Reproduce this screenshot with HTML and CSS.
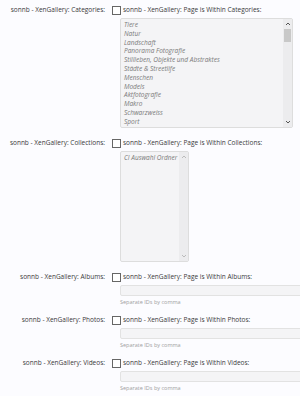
FILE: index.html
```html
<!DOCTYPE html>
<html lang="de">
<head>
    <meta charset="UTF-8">
    <title>sonnb - XenGallery Optionen</title>
    <link rel="stylesheet" href="styles.css">
</head>
<body>
    <div class="options">
        <!-- Kategorien -->
        <div class="row">
            <div class="label">sonnb - XenGallery: Categories:</div>
            <div class="field">
                <div class="check"><span class="box"></span>sonnb - XenGallery: Page is Within Categories:</div>
                <div class="listbox wide">
                    <div class="items">
                        <div>Tiere</div>
                        <div>Natur</div>
                        <div>Landschaft</div>
                        <div>Panorama Fotografie</div>
                        <div>Stillleben, Objekte und Abstraktes</div>
                        <div>Städte &amp; Streetlife</div>
                        <div>Menschen</div>
                        <div>Models</div>
                        <div>Aktfotografie</div>
                        <div>Makro</div>
                        <div>Schwarzweiss</div>
                        <div>Sport</div>
                    </div>
                    <div class="scrollbar">
                        <svg class="arrow" viewBox="0 0 6 4"><path d="M1 3 L3 1 L5 3" fill="none" stroke="currentColor" stroke-width="1"/></svg>
                        <span class="thumb"></span>
                        <svg class="arrow down" viewBox="0 0 6 4"><path d="M1 1 L3 3 L5 1" fill="none" stroke="currentColor" stroke-width="1"/></svg>
                    </div>
                </div>
            </div>
        </div>

        <!-- Sammlungen -->
        <div class="row">
            <div class="label">sonnb - XenGallery: Collections:</div>
            <div class="field">
                <div class="check"><span class="box"></span>sonnb - XenGallery: Page is Within Collections:</div>
                <div class="listbox narrow">
                    <div class="items">
                        <div>CI Auswahl Ordner</div>
                    </div>
                    <div class="scrollbar empty">
                        <svg class="arrow" viewBox="0 0 6 4"><path d="M1 3 L3 1 L5 3" fill="none" stroke="currentColor" stroke-width="1"/></svg>
                        <svg class="arrow down" viewBox="0 0 6 4"><path d="M1 1 L3 3 L5 1" fill="none" stroke="currentColor" stroke-width="1"/></svg>
                    </div>
                </div>
            </div>
        </div>

        <div class="row small">
            <div class="label">sonnb - XenGallery: Albums:</div>
            <div class="field">
                <div class="check"><span class="box"></span>sonnb - XenGallery: Page is Within Albums:</div>
                <input type="text" class="textbox">
                <div class="hint">Separate IDs by comma</div>
            </div>
        </div>

        <div class="row small">
            <div class="label">sonnb - XenGallery: Photos:</div>
            <div class="field">
                <div class="check"><span class="box"></span>sonnb - XenGallery: Page is Within Photos:</div>
                <input type="text" class="textbox">
                <div class="hint">Separate IDs by comma</div>
            </div>
        </div>

        <div class="row small">
            <div class="label">sonnb - XenGallery: Videos:</div>
            <div class="field">
                <div class="check"><span class="box"></span>sonnb - XenGallery: Page is Within Videos:</div>
                <input type="text" class="textbox">
                <div class="hint">Separate IDs by comma</div>
            </div>
        </div>
    </div>
</body>
</html>
```

FILE: styles.css
```css
body {
    margin: 0;
    background-color: #fcfcff;
    font-family: "Open Sans", "Noto Sans", sans-serif;
    font-size: 6.5px;
    color: #3a3a3a;
}
.options {
    padding-top: 5px;
}
.row {
    display: grid;
    grid-template-columns: 105px 1fr;
    column-gap: 7px;
    margin-bottom: 10px;
}
.row.small {
    margin-bottom: 9px;
}
.label {
    text-align: right;
    line-height: 10px;
    white-space: nowrap;
}
.field {
    min-width: 0;
    overflow: hidden;
}
.check {
    display: flex;
    align-items: center;
    line-height: 10px;
    white-space: nowrap;
}
.box {
    width: 7px;
    height: 7px;
    border: 1px solid #666;
    background-color: #fff;
    margin-right: 2px;
}
.listbox {
    display: flex;
    margin: 3px 0 0 8px;
    background-color: #f4f4f6;
    border: 1px solid #ddd;
    border-radius: 2px;
}
.listbox.wide {
    width: 171px;
    height: 108px;
}
.listbox.narrow {
    width: 67px;
    height: 109px;
}
.items {
    flex: 1;
    padding: 2px 3px;
    font-style: italic;
    color: #7a7a7a;
    line-height: 8.8px;
    white-space: nowrap;
    overflow: hidden;
}
.scrollbar {
    width: 9px;
    display: flex;
    flex-direction: column;
    align-items: center;
    padding: 3px 0;
    box-sizing: border-box;
    background-color: #ececee;
}
.arrow {
    width: 6px;
    height: 4px;
    color: #555;
    flex-shrink: 0;
}
.scrollbar.empty .arrow {
    color: #bbb;
}
.arrow.down {
    margin-top: auto;
}
.thumb {
    width: 7px;
    height: 13px;
    margin-top: 3px;
    background-color: #c8c8c8;
}
.textbox {
    display: block;
    box-sizing: border-box;
    width: 200px;
    height: 11px;
    margin: 3px 0 0 8px;
    padding: 0;
    border: 1px solid #e2e2e2;
    border-radius: 2px;
    background-color: #f4f4f6;
}
.hint {
    margin: 3px 0 0 8px;
    font-size: 5.5px;
    color: #a0a0a0;
    line-height: 7px;
}
```
